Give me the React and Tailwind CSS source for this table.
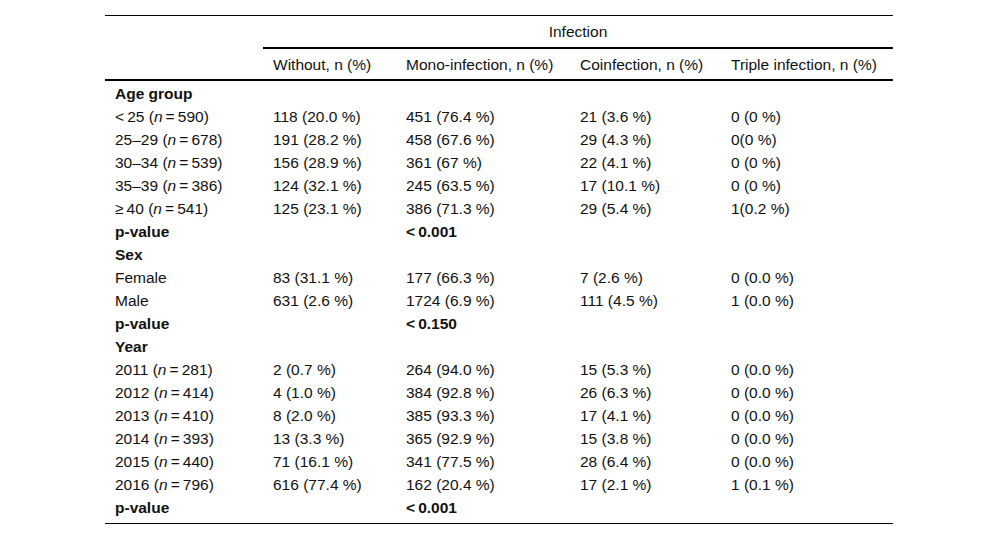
import React from "react";

const N = ({ label, n }) => (
  <>
    {label} (<i>n</i>{"\u2009=\u2009"}{n})
  </>
);

const rows = [
  { type: "head", label: "Age group" },
  { label: <N label={"<\u200925"} n="590" />, c: ["118 (20.0 %)", "451 (76.4 %)", "21 (3.6 %)", "0 (0 %)"] },
  { label: <N label="25–29" n="678" />, c: ["191 (28.2 %)", "458 (67.6 %)", "29 (4.3 %)", "0(0 %)"] },
  { label: <N label="30–34" n="539" />, c: ["156 (28.9 %)", "361 (67 %)", "22 (4.1 %)", "0 (0 %)"] },
  { label: <N label="35–39" n="386" />, c: ["124 (32.1 %)", "245 (63.5 %)", "17 (10.1 %)", "0 (0 %)"] },
  { label: <N label={"\u2265\u200940"} n="541" />, c: ["125 (23.1 %)", "386 (71.3 %)", "29 (5.4 %)", "1(0.2 %)"] },
  { type: "p", label: "p-value", v: "<\u20090.001" },
  { type: "head", label: "Sex" },
  { label: "Female", c: ["83 (31.1 %)", "177 (66.3 %)", "7 (2.6 %)", "0 (0.0 %)"] },
  { label: "Male", c: ["631 (2.6 %)", "1724 (6.9 %)", "111 (4.5 %)", "1 (0.0 %)"] },
  { type: "p", label: "p-value", v: "<\u20090.150" },
  { type: "head", label: "Year" },
  { label: <N label="2011" n="281" />, c: ["2 (0.7 %)", "264 (94.0 %)", "15 (5.3 %)", "0 (0.0 %)"] },
  { label: <N label="2012" n="414" />, c: ["4 (1.0 %)", "384 (92.8 %)", "26 (6.3 %)", "0 (0.0 %)"] },
  { label: <N label="2013" n="410" />, c: ["8 (2.0 %)", "385 (93.3 %)", "17 (4.1 %)", "0 (0.0 %)"] },
  { label: <N label="2014" n="393" />, c: ["13 (3.3 %)", "365 (92.9 %)", "15 (3.8 %)", "0 (0.0 %)"] },
  { label: <N label="2015" n="440" />, c: ["71 (16.1 %)", "341 (77.5 %)", "28 (6.4 %)", "0 (0.0 %)"] },
  { label: <N label="2016" n="796" />, c: ["616 (77.4 %)", "162 (20.4 %)", "17 (2.1 %)", "1 (0.1 %)"] },
  { type: "p", label: "p-value", v: "<\u20090.001" },
];

const grid = "grid grid-cols-[158px_133px_174px_151px_172px]";

export default function App() {
  return (
    <div
      className="w-[1000px] h-[540px] bg-white text-[#111] pt-[15px] pl-[105px]"
      style={{ fontFamily: '"Liberation Sans", Arial, sans-serif' }}
    >
      <div className="w-[788px] text-[15.5px] leading-[23px]">
        <div className="border-t border-black">
          <div className={grid}>
            <div />
            <div className="col-span-4 h-[33px] flex items-center justify-center border-b-2 border-black">
              Infection
            </div>
          </div>
          <div className={`${grid} border-b-2 border-black h-[32px] items-center`}>
            <div />
            <div className="pl-[10px]">Without, n (%)</div>
            <div className="pl-[10px]">Mono-infection, n (%)</div>
            <div className="pl-[10px]">Coinfection, n (%)</div>
            <div className="pl-[10px]">Triple infection, n (%)</div>
          </div>
        </div>
        <div className="border-b border-black pt-[1px] pb-[4px]">
          {rows.map((r, i) => {
            if (r.type === "head")
              return (
                <div key={i} className={`${grid} h-[23px] items-center`}>
                  <div className="pl-[10px] font-bold">{r.label}</div>
                </div>
              );
            if (r.type === "p")
              return (
                <div key={i} className={`${grid} h-[23px] items-center font-bold`}>
                  <div className="pl-[10px]">{r.label}</div>
                  <div />
                  <div className="pl-[10px]">{r.v}</div>
                </div>
              );
            return (
              <div key={i} className={`${grid} h-[23px] items-center`}>
                <div className="pl-[10px] whitespace-nowrap">{r.label}</div>
                {r.c.map((v, j) => (
                  <div key={j} className="pl-[10px] whitespace-nowrap">
                    {v}
                  </div>
                ))}
              </div>
            );
          })}
        </div>
      </div>
    </div>
  );
}
